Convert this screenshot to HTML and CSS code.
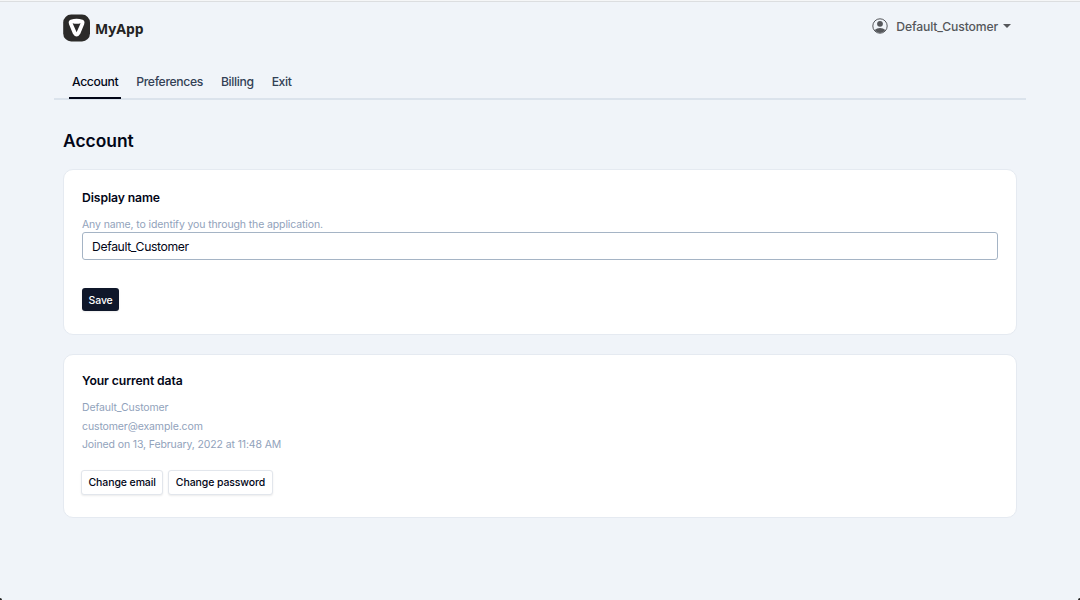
FILE: index.html
```html
<!DOCTYPE html>
<html lang="en">
<head>
  <meta charset="UTF-8">
  <meta name="viewport" content="width=device-width, initial-scale=1.0">
  <title>MyApp - Account</title>
  <link rel="stylesheet" href="styles.css">
</head>
<body>
  <div class="container">
    <header class="header">
      <a class="logo">
        <svg width="28" height="28" viewBox="0 0 28 28">
          <rect x="0.2" y="0.6" width="26.8" height="26.8" rx="8" fill="#2b2a29"/>
          <path d="M8.2 7.2Q13.6 5.2 19 7.2Q20.4 7.9 19.8 9.6L16 18.9Q13.6 22.9 11.2 18.9L7.4 9.6Q6.8 7.9 8.2 7.2Z" fill="#fff" stroke="#fff" stroke-width="3" stroke-linejoin="round"/>
          <path d="M9.6 9.2Q13.6 10.3 17.6 9.2L13.6 18.2Z" fill="#2b2a29"/>
        </svg>
        <span class="logo-text">MyApp</span>
      </a>
      <div class="user">
        <svg class="avatar" width="16" height="16" viewBox="0 0 16 16">
          <circle cx="8" cy="8" r="7.2" fill="none" stroke="#55575b" stroke-width="1"/>
          <circle cx="8" cy="5.8" r="2.9" fill="#55575b"/>
          <path d="M2.6 12Q5 10 8 10T13.4 12Q11.3 15 8 15T2.6 12Z" fill="#55575b"/>
        </svg>
        <span class="user-name">Default_Customer</span>
        <span class="caret"></span>
      </div>
    </header>

    <nav class="tabs">
      <a class="tab active">Account</a>
      <a class="tab">Preferences</a>
      <a class="tab">Billing</a>
      <a class="tab">Exit</a>
    </nav>

    <main class="content">
      <h1>Account</h1>

      <section class="card name-card">
        <h2>Display name</h2>
        <p>Any name, to identify you through the application.</p>
        <input type="text" value="Default_Customer">
        <button class="btn btn-primary">Save</button>
      </section>

      <section class="card data-card">
        <h2>Your current data</h2>
        <p>Default_Customer</p>
        <p>customer@example.com</p>
        <p>Joined on 13, February, 2022 at 11:48 AM</p>
        <div class="buttons">
          <button class="btn">Change email</button>
          <button class="btn">Change password</button>
        </div>
      </section>
    </main>
  </div>
  <span class="corner corner-left"></span>
  <span class="corner corner-right"></span>
</body>
</html>
```
FILE: styles.css
```css
* {
  box-sizing: border-box;
}
body {
  margin: 0;
  height: 600px;
  overflow: hidden;
  font-family: Inter, sans-serif;
  color: #020617;
  background-color: #f0f4f9;
  border-top: 1px solid #f5f6f7;
}
.container {
  height: 599px;
  padding: 0 54px;
  border-top: 1px solid #dcdee0;
}
.header {
  display: flex;
  justify-content: space-between;
  height: 62px;
  padding: 12px 15px 0 9px;
}
.logo {
  display: flex;
  height: 28px;
  align-items: center;
  gap: 4px;
}
.logo-text {
  padding-top: 1px;
  font-family: "Noto Sans", sans-serif;
  font-size: 14px;
  font-weight: 700;
  color: #242322;
}
.user {
  display: flex;
  align-items: center;
  height: 24px;
  font-size: 12.2px;
  font-weight: 500;
  letter-spacing: -0.15px;
  color: #55575b;
}
.user-name {
  margin-left: 8px;
}
.caret {
  margin-left: 5px;
  border: 4px solid transparent;
  border-top-color: #55575b;
  border-bottom: 0;
}
.tabs {
  display: flex;
  gap: 12px;
  height: 36px;
  padding-left: 15px;
  border-bottom: 2px solid #dbe3ec;
}
.tab {
  height: 35px;
  padding: 0 3px;
  font-size: 12.2px;
  font-weight: 450;
  letter-spacing: -0.36px;
  line-height: 35px;
  color: #334155;
}
.tab.active {
  color: #020617;
  border-bottom: 2px solid #020617;
}
.content {
  padding: 28px 9px 0;
}
h1 {
  margin: 0 0 15px;
  font-size: 17.4px;
  font-weight: 600;
  line-height: 26px;
}
.card {
  padding: 17px 18px 0;
  background-color: #fff;
  border: 1px solid #e5eaf1;
  border-radius: 10px;
}
.name-card {
  height: 166px;
  margin-bottom: 19px;
  padding-top: 19px;
}
.name-card p {
  padding-top: 2px;
  line-height: 15px;
}
.data-card {
  height: 164px;
}
h2 {
  margin: 0 0 8px;
  font-size: 12.2px;
  font-weight: 600;
  letter-spacing: -0.1px;
  line-height: 18px;
}
.data-card h2 {
  margin-bottom: 9px;
}
p {
  margin: 0;
  font-size: 10.5px;
  letter-spacing: -0.12px;
  line-height: 18.7px;
  color: #91a2bb;
}
input {
  display: block;
  width: 100%;
  height: 28px;
  margin-bottom: 28px;
  padding: 0 9px;
  font-family: inherit;
  font-size: 12.2px;
  letter-spacing: -0.36px;
  color: #020617;
  background-color: #fff;
  border: 1px solid #a5b4c5;
  border-radius: 3px;
}
.btn {
  height: 25px;
  padding: 0 6.5px;
  font-family: inherit;
  font-size: 10.5px;
  font-weight: 500;
  letter-spacing: -0.1px;
  color: #020617;
  background-color: #fff;
  border: 1px solid #e2e6ec;
  border-radius: 3px;
  box-shadow: 0 1px 2px rgba(0, 0, 0, 0.08);
}
.btn-primary {
  display: block;
  height: 23px;
  padding-top: 1px;
  color: #fff;
  background-color: #0f172a;
  border: 0;
}
.buttons {
  display: flex;
  gap: 5px;
  margin: 15px 0 0 -1px;
}
.corner {
  position: absolute;
  bottom: 0;
  width: 2px;
  height: 2px;
  background-color: #222;
}
.corner-left {
  left: 0;
  border-top-right-radius: 2px;
}
.corner-right {
  right: 0;
  border-top-left-radius: 2px;
}
```
